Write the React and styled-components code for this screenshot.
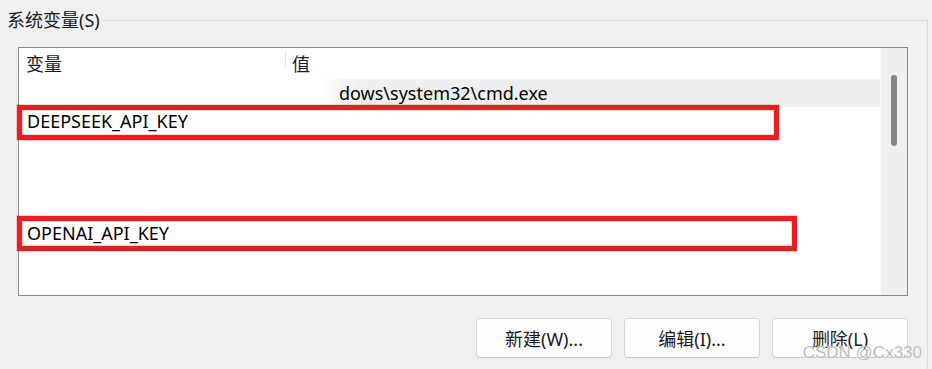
import React from "react";
import styled, { createGlobalStyle } from "styled-components";

const GlobalStyle = createGlobalStyle`
  html, body {
    margin: 0;
    padding: 0;
    background: #f0f0f0;
  }
  body {
    font-family: "Noto Sans", "Noto Sans CJK SC", sans-serif;
    color: #1a1a1a;
  }
`;

const rows = [
  { name: "", value: "dows\\system32\\cmd.exe", indent: 53, selected: true },
  { name: "DEEPSEEK_API_KEY", value: "", mark: { top: -2, width: 762 } },
  { name: "", value: "" },
  { name: "", value: "" },
  { name: "", value: "" },
  { name: "OPENAI_API_KEY", value: "", mark: { top: -3, width: 780 } },
  { name: "", value: "" },
];

export default function App() {
  return (
    <Page>
      <GlobalStyle />
      <Group>
        <Legend>系统变量(S)</Legend>
        <List>
          <Content>
            <Header>
              <HeadCell $width={266}>变量</HeadCell>
              <HeadDivider />
              <HeadCell>值</HeadCell>
            </Header>
            {rows.map((row, i) => (
              <Row key={i} $selected={row.selected}>
                <NameCell>{row.name}</NameCell>
                <ValueCell $indent={row.indent}>{row.value}</ValueCell>
                {row.mark && <Mark $top={row.mark.top} $width={row.mark.width} />}
              </Row>
            ))}
          </Content>
          <ScrollTrack>
            <ScrollThumb />
          </ScrollTrack>
        </List>
        <Buttons>
          <Button>新建(W)...</Button>
          <Button>编辑(I)...</Button>
          <Button>删除(L)</Button>
        </Buttons>
      </Group>
      <Watermark>CSDN @Cx330</Watermark>
    </Page>
  );
}

const Page = styled.div`
  position: relative;
  width: 932px;
  height: 369px;
  overflow: hidden;
`;

const Group = styled.fieldset`
  width: 928px;
  box-sizing: border-box;
  margin: 8px 0 0;
  padding: 0 19px 0 0;
  border: 1px solid #dadada;
  border-left: none;
  border-bottom: none;
  min-height: 400px;
`;

const Legend = styled.legend`
  padding: 0 2px 0 7px;
  font-size: 18px;
  line-height: 24px;
  color: #1b1b1b;
`;

const List = styled.div`
  margin: 15px 0 0 18px;
  height: 249px;
  box-sizing: border-box;
  border: 1px solid #858891;
  background: #fff;
  display: grid;
  grid-template-columns: 1fr 27px;
`;

const Content = styled.div`
  display: flex;
  flex-direction: column;
`;

const Header = styled.div`
  display: flex;
  align-items: center;
  height: 31px;
  font-size: 18px;
  color: #1a1a1a;
`;

const HeadCell = styled.div`
  ${(p) => (p.$width ? `width: ${p.$width}px;` : "flex: 1;")}
  padding-left: ${(p) => (p.$width ? 7 : 6)}px;
  box-sizing: border-box;
  line-height: 24px;
`;

const HeadDivider = styled.span`
  align-self: flex-start;
  margin-top: 2px;
  width: 1px;
  height: 17px;
  background: #e3e3e3;
`;

const Row = styled.div`
  position: relative;
  display: grid;
  grid-template-columns: 267px 1fr;
  align-items: center;
  height: 28px;
  font-size: 18px;
  color: #000;
  background: ${(p) =>
    p.$selected
      ? "linear-gradient(to right, #fff 0 300px, #efefef 345px)"
      : "#fff"};
`;

const NameCell = styled.div`
  position: relative;
  z-index: 1;
  padding-left: 8px;
  white-space: nowrap;
  line-height: 24px;
`;

const ValueCell = styled.div`
  position: relative;
  z-index: 1;
  padding-left: ${(p) => p.$indent || 6}px;
  white-space: nowrap;
  line-height: 24px;
`;

const Mark = styled.span`
  position: absolute;
  z-index: 2;
  left: -2px;
  top: ${(p) => p.$top}px;
  width: ${(p) => p.$width}px;
  height: 35px;
  box-sizing: border-box;
  border: 5px solid #e81e25;
  box-shadow: 0 0 0 1px rgba(232, 30, 37, 0.2),
    inset 0 0 0 1px rgba(232, 30, 37, 0.2);
  pointer-events: none;
`;

const ScrollTrack = styled.div`
  border-left: 1px solid #f8f8f8;
  background: #efefef;
  display: flex;
  justify-content: center;
  padding-top: 27px;
`;

const ScrollThumb = styled.div`
  width: 6px;
  height: 71px;
  border-radius: 3px;
  background: #868686;
`;

const Buttons = styled.div`
  display: flex;
  justify-content: flex-end;
  gap: 12px;
  margin-top: 22px;
`;

const Button = styled.button`
  width: 136px;
  height: 40px;
  padding: 0;
  border: 1px solid #d6d6d6;
  border-bottom-color: #c4c4c4;
  border-radius: 4px;
  background: #fdfdfd;
  font-family: "Noto Sans", "Noto Sans CJK SC", sans-serif;
  font-size: 18px;
  color: #1a1a1a;
`;

const Watermark = styled.div`
  position: absolute;
  z-index: 3;
  right: 10px;
  bottom: 8px;
  font-family: "Liberation Sans", Arial, sans-serif;
  font-size: 17px;
  line-height: 17px;
  color: #bcbcbc;
  text-shadow: 0 0 1px #fff, 0 0 1px #fff;
`;
